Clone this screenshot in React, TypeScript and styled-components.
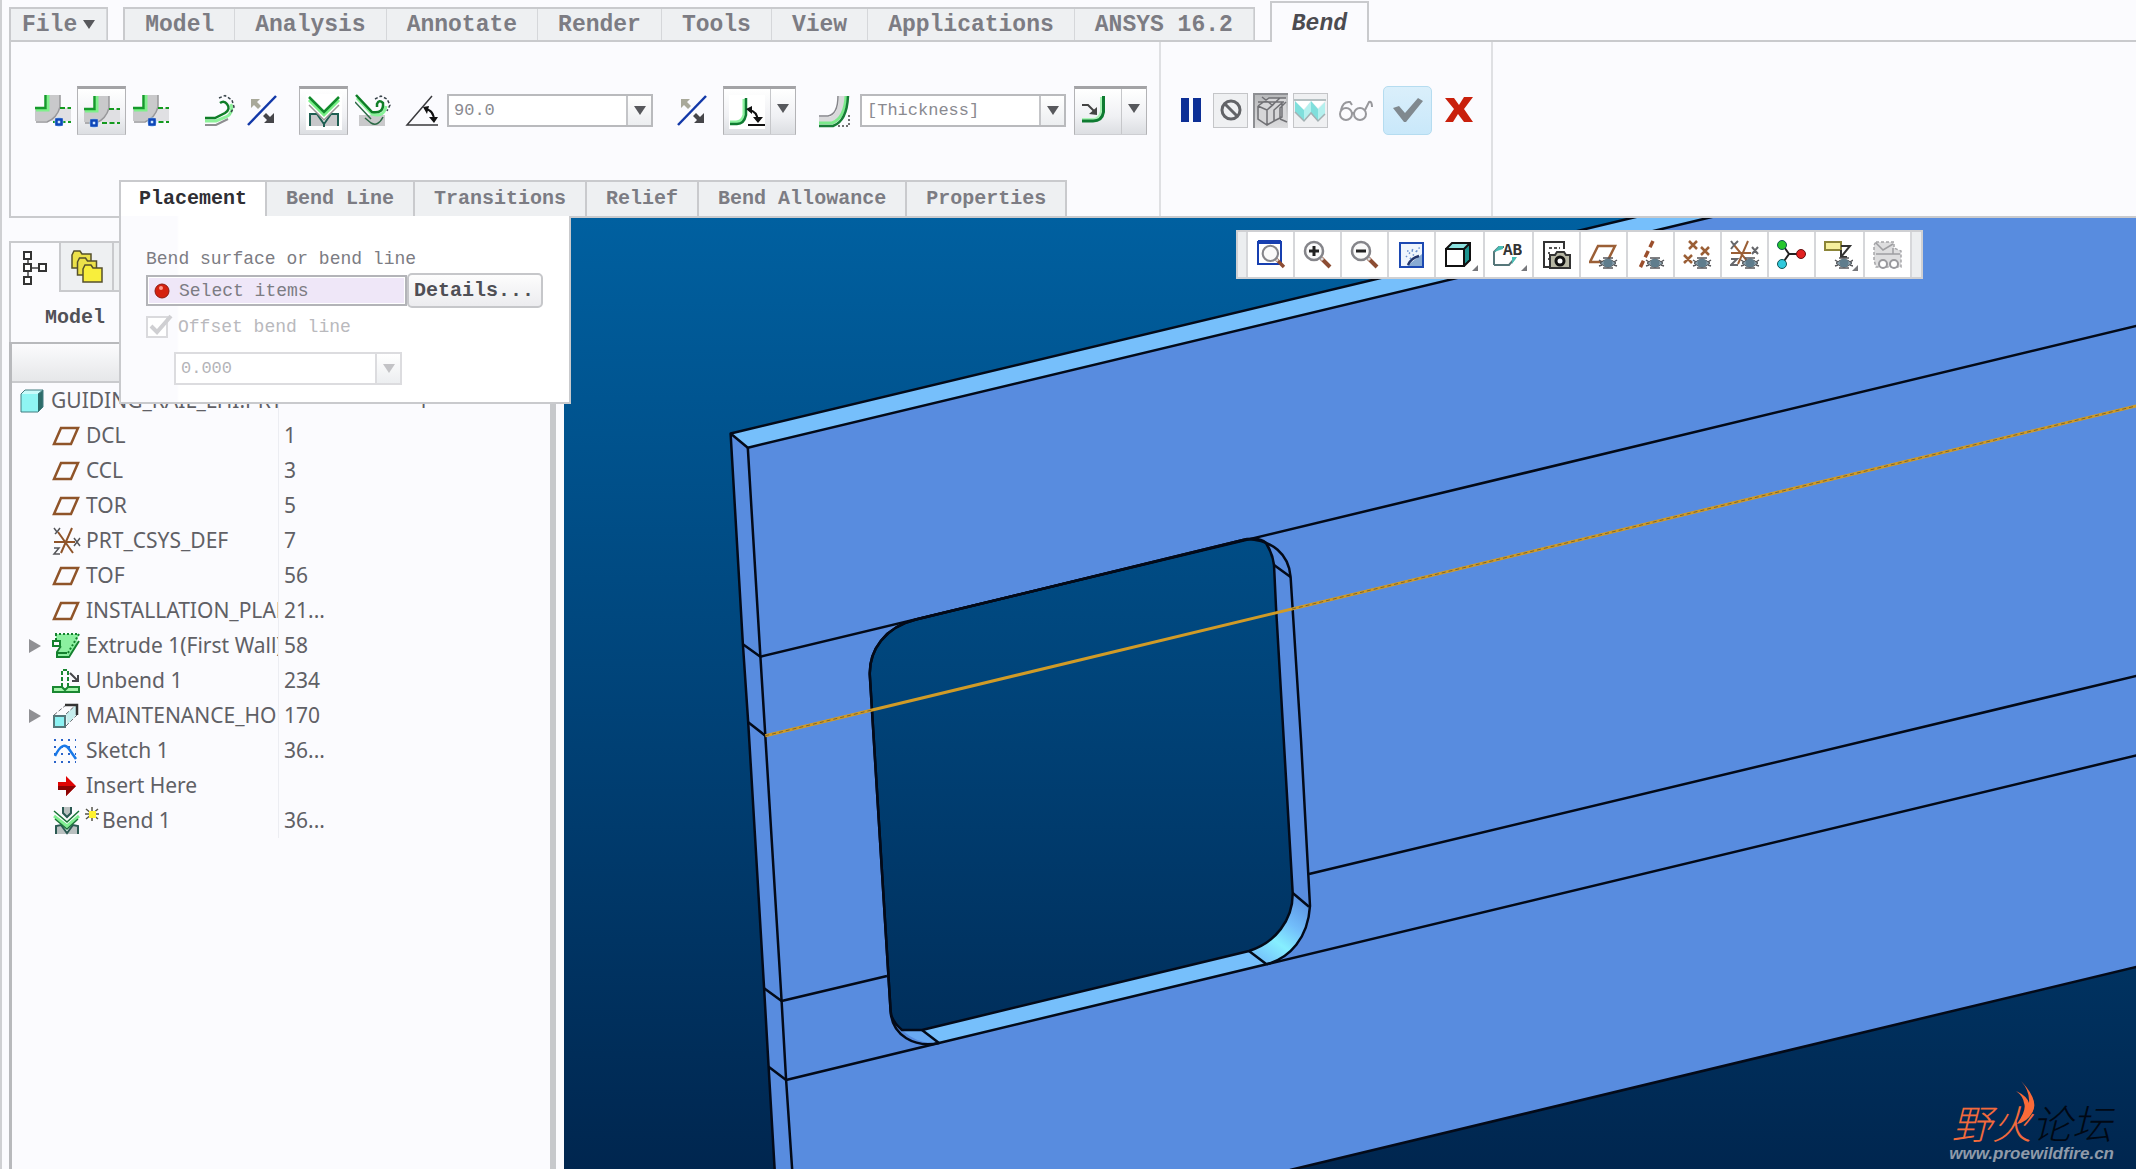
import React from "react";
import styled, { createGlobalStyle, css } from "styled-components";

const mono = '"Liberation Mono", "Noto Sans CJK SC", monospace';
const sans = '"Noto Sans", "Open Sans", "Noto Sans CJK SC", sans-serif';
const line = "#c9cacd";
const ink = "#7c7c83";

const GlobalStyle = createGlobalStyle`
  *, *::before, *::after { box-sizing: border-box; }
  body { margin: 0; background: #fbfbfe; font-family: ${mono}; color: ${ink}; overflow: hidden; }
  button, input { font: inherit; color: inherit; margin: 0; padding: 0; border-radius: 0; }
  button { background: none; border: 0; }
  svg { display: block; flex: none; }
`;

const Window = styled.div`
  min-height: 100vh;
  display: flex;
  flex-direction: column;
  border-left: 2px solid #cfd0d3;
  padding-left: 7px;
  background: #fbfbfe;
`;

/* ---------- ribbon tabs ---------- */
const TabStrip = styled.nav`
  display: flex;
  align-items: flex-end;
  height: 42px;
  border-bottom: 2px solid ${line};
`;
const TabGroup = styled.div`
  display: flex;
  margin: 0 15px -2px 0;
  border: 2px solid ${line};
  border-right-width: 1px;
`;
const RibbonTab = styled.button<{ $tight?: boolean }>`
  height: 31px;
  padding: 0 ${(p) => (p.$tight ? 11 : 20)}px;
  display: flex;
  align-items: center;
  gap: 6px;
  font-size: 23px;
  line-height: 30px;
  font-weight: 700;
  white-space: pre;
  background: #eef0f2;
  border-right: 1px solid #d5d7da;
`;
const CurrentTab = styled.button`
  height: 41px;
  margin-bottom: -2px;
  padding: 2px 20px 0;
  font-size: 23px;
  font-weight: 700;
  font-style: italic;
  color: #4b4b50;
  background: #fbfbfe;
  border: 2px solid ${line};
  border-bottom: 0;
`;
const Caret = styled.i<{ $pale?: boolean }>`
  display: block;
  border: 6px solid transparent;
  border-top: 9px solid ${(p) => (p.$pale ? "#c3c3c6" : "#57585c")};
  border-bottom: 0;
`;

/* ---------- ribbon ---------- */
const Ribbon = styled.section`
  position: relative;
  z-index: 2;
  display: flex;
  height: 176px;
  border-left: 2px solid ${line};
  border-bottom: 2px solid ${line};
`;
const Dashboard = styled.div`
  width: 1148px;
  display: flex;
  flex-direction: column;
  justify-content: space-between;
  padding-top: 44px;
`;
const Tools = styled.div`
  display: flex;
  align-items: center;
  height: 49px;
  padding-left: 17px;
`;
const Cluster = styled.div<{ $before?: number }>`
  display: flex;
  align-items: center;
  margin-left: ${(p) => p.$before ?? 0}px;
`;
const pressed = css`
  background: linear-gradient(#fff, #f0f1f4 60%, #dcdee2);
  border: 1px solid #b3b3b6;
  border-top: 3px solid #a3a3a6;
  border-bottom-color: #cdced2;
`;
const ToolButton = styled.button<{ $pressed?: boolean; $narrow?: boolean }>`
  width: ${(p) => (p.$narrow ? 42 : 49)}px;
  height: 49px;
  display: flex;
  align-items: center;
  justify-content: center;
  ${(p) => p.$pressed && pressed}
`;
const Split = styled.div`
  display: flex;
  width: 73px;
  height: 49px;
  ${pressed}
`;
const SplitMain = styled.button`
  flex: 1;
  display: flex;
  align-items: center;
  justify-content: center;
  border-right: 1px solid #c6c7ca;
`;
const SplitArrow = styled.button`
  width: 24px;
  padding: 0 6px 6px;
`;
const Combo = styled.div<{ $w: number; $pale?: boolean }>`
  display: flex;
  width: ${(p) => p.$w}px;
  height: 33px;
  border: 2px solid ${(p) => (p.$pale ? "#dcdcdf" : "#b9babd")};
  background: #fff;
  color: ${(p) => (p.$pale ? "#b4b4b8" : "#8a8a90")};
  input {
    flex: 1;
    min-width: 0;
    border: 0;
    padding: 0 5px;
    font-size: 17px;
    background: transparent;
    outline: none;
  }
  button {
    width: 25px;
    display: flex;
    align-items: center;
    justify-content: center;
    border-left: 2px solid ${(p) => (p.$pale ? "#dcdcdf" : "#c4c5c8")};
    background: linear-gradient(#fff, #eceef0);
  }
`;
const SubTabs = styled.div`
  position: relative;
  align-self: flex-start;
  display: flex;
  margin-left: 108px;
`;
const SubTab = styled.button<{ $on?: boolean }>`
  height: 36px;
  padding: 0 19px;
  font-size: 20px;
  font-weight: 700;
  line-height: 34px;
  border: solid ${line};
  border-width: 2px 2px 0 0;
  background: ${(p) => (p.$on ? "#fff" : "#eef0f2")};
  color: ${(p) => (p.$on ? "#2e2e33" : ink)};
  &:first-child { border-left-width: 2px; padding: 0 18px; }
`;
const Confirm = styled.div`
  display: flex;
  align-items: center;
  width: 334px;
  height: 174px;
  padding: 0 0 38px 12px;
  border: solid #dfe0e3;
  border-width: 0 2px;
  gap: 5px;
`;
const SmallTool = styled.button<{ $look?: "box" | "down" }>`
  width: 35px;
  height: 35px;
  display: flex;
  align-items: center;
  justify-content: center;
  border: ${(p) => (p.$look ? "1px solid #c4c5c8" : "0")};
  background: ${(p) => (p.$look === "box" ? "#eff0f2" : p.$look === "down" ? "linear-gradient(#b9babc, #dcdcde)" : "none")};
  ${(p) => p.$look === "down" && "border: 2px solid #8e8f93; border-width: 2px 0 0 2px;"}
`;
const Accept = styled.button`
  width: 49px;
  height: 49px;
  margin-left: 5px;
  display: flex;
  align-items: center;
  justify-content: center;
  border: 1px solid #b5dcf0;
  border-radius: 5px;
  background: linear-gradient(#daeffb, #c9e8fa);
`;

/* ---------- placement slide-down ---------- */
const Slide = styled.form`
  position: absolute;
  top: 100%;
  left: 0;
  width: 452px;
  padding: 31px 26px 17px 25px;
  background: linear-gradient(90deg, #fbfbfe 56px, #fff 58px);
  border: 2px solid ${line};
  border-top-width: 0;
  font-size: 18px;
  line-height: 24px;
`;
const Collector = styled.div`
  display: flex;
  align-items: center;
  margin-top: 2px;
`;
const CollectorBox = styled.label`
  flex: 1;
  min-width: 0;
  display: flex;
  align-items: center;
  gap: 9px;
  height: 31px;
  padding: 0 0 0 6px;
  border: 2px solid #b3b4b8;
  background: #efe7f8;
  box-shadow: inset 0 0 0 1px #fff;
  input { flex: 1; min-width: 0; border: 0; background: transparent; font-size: 18px; outline: none; }
`;
const Details = styled.button`
  flex: none;
  width: 136px;
  height: 35px;
  font-size: 20px;
  font-weight: 700;
  color: #4f4f55;
  text-align: left;
  padding-left: 5px;
  border: 2px solid #c6c7ca;
  border-radius: 5px;
  background: linear-gradient(#fdfdfd, #ececef);
`;
const Check = styled.label`
  display: flex;
  align-items: center;
  gap: 10px;
  height: 24px;
  margin: 7px 0 13px;
  color: #b9b9bd;
  span { position: relative; display: block; width: 22px; height: 22px; }
  input { appearance: none; display: block; width: 22px; height: 22px; border: 2px solid #dadadd; background: #fff; }
  svg { position: absolute; left: 3px; top: -2px; }
`;
const Offset = styled.div`
  margin-left: 28px;
`;

/* ---------- work area ---------- */
const Work = styled.main`
  flex: 1;
  display: flex;
`;
const Navigator = styled.aside`
  width: 555px;
  display: flex;
  flex-direction: column;
  padding-top: 23px;
`;
const NavTabs = styled.div`
  display: flex;
  height: 51px;
`;
const NavTab = styled.button<{ $on?: boolean }>`
  width: ${(p) => (p.$on ? 52 : 53)}px;
  display: flex;
  align-items: center;
  justify-content: center;
  border: 2px solid ${line};
  border-width: ${(p) => (p.$on ? "2px 2px 0 2px" : "2px 2px 2px 0")};
  background: ${(p) => (p.$on ? "#fbfbfe" : "#eef0f2")};
`;
const NavTitle = styled.h2`
  height: 50px;
  margin: 0;
  padding-left: 34px;
  border-left: 2px solid ${line};
  font-size: 20px;
  line-height: 52px;
  color: #515157;
`;
const TreeFrame = styled.div`
  flex: 1;
  margin-right: 8px;
  border-left: 3px solid #b8b9bc;
  border-right: 6px solid #c6c8cb;
  border-top: 2px solid #b8b9bc;
`;
const Tree = styled.table`
  width: 100%;
  table-layout: fixed;
  border-collapse: separate;
  border-spacing: 0;
  font-family: ${sans};
  font-size: 21px;
  color: #606065;
  th { height: 39px; padding: 0; border-bottom: 2px solid ${line}; background: linear-gradient(#fbfbfd, #e6e7e9); }
  th:first-child { width: 267px; }
  td { height: 35px; padding: 0; overflow: hidden; white-space: nowrap; line-height: 35px; }
  td:first-child { border-right: 1px solid #ecedf2; }
  td + td { padding-left: 5px; }
`;
const Item = styled.div<{ $root?: boolean }>`
  display: flex;
  align-items: center;
  height: 35px;
  padding-left: ${(p) => (p.$root ? 8 : 16)}px;
`;
const Twisty = styled.span`
  flex: none;
  width: 24px;
`;
const ItemIcon = styled.span<{ $wide?: boolean }>`
  flex: none;
  width: ${(p) => (p.$wide ? 50 : 34)}px;
  display: flex;
`;
const RootIcon = styled.span`
  flex: none;
  width: 31px;
`;
const RootValue = styled.span`
  padding-left: 133px;
`;

const Viewport = styled.section`
  position: relative;
  flex: 1;
  overflow: hidden;
  background: linear-gradient(#0060a0, #00264f);
`;
const Scene = styled.svg`
  position: absolute;
  inset: 0;
  width: 100%;
  height: 100%;
`;
const ViewBar = styled.div`
  position: absolute;
  top: 12px;
  right: 213px;
  display: flex;
  height: 49px;
  border: 2px solid #cfd0d3;
  background: #eceef0;
  padding: 0 9px 0 8px;
`;
const ViewButton = styled.button<{ $menu?: boolean }>`
  position: relative;
  width: ${(p) => (p.$menu ? 49 : 47)}px;
  display: flex;
  align-items: center;
  justify-content: center;
  background: #fff;
  border-left: 2px solid #d6d7da;
  &:last-child { width: 49px; border-right: 2px solid #d6d7da; }
  ${(p) =>
    p.$menu &&
    css`
      padding-right: 4px;
      &::after {
        content: "";
        position: absolute;
        right: 5px;
        bottom: 6px;
        border: 3px solid #77787c;
        border-top-color: transparent;
        border-left-color: transparent;
      }
    `}
`;
const Watermark = styled.div`
  position: absolute;
  right: 22px;
  bottom: 5px;
  display: flex;
  flex-direction: column;
  align-items: center;
`;
const Brand = styled.div`
  position: relative;
  font: italic 300 40px/44px "Noto Sans CJK SC", sans-serif;
  color: #000814;
  b { font-weight: 300; color: #f26a3c; }
  svg { position: absolute; left: 64px; top: -19px; }
`;
const Site = styled.div`
  font: italic 700 17px/20px "Liberation Sans", sans-serif;
  color: #8f9aa9;
`;

/* ---------- drawings ---------- */
const Svg = ({ w = 36, h = 36, children }: { w?: number; h?: number; children: React.ReactNode }) => (
  <svg width={w} height={h} viewBox={`0 0 ${w} ${h}`} fill="none" aria-hidden="true">{children}</svg>
);

const BendLineIcon = ({ dot }: { dot: number }) => (
  <Svg w={36} h={34}>
    <path d="M12 1H25V14H36V27H0V15H12Z" fill="#e0e0e3" />
    <path d="M12 1H25V12Q23 23 14 27H0V15H12Z" fill="#c9c9cb" />
    <path d="M25 1V13Q22 24 12 28H1" stroke="#98989b" strokeWidth="1.500" />
    <path d="M13 1V16H1" stroke="#7ff08b" strokeWidth="3" />
    <path d="M10.500 1V14H0" stroke="#159a2b" strokeWidth="2.500" />
    <path d="M25 14H36M18 28H36" stroke="#149a1f" strokeWidth="2" strokeDasharray="5 2.500" />
    <circle cx={dot} cy="28" r="4.500" fill="#8fc7ff" />
    <rect x={dot - 2.5} y="25.500" width="5" height="5" fill="#cfe5ff" stroke="#0e46b8" strokeWidth="2.500" />
  </Svg>
);
const RollIcon = () => (
  <Svg w={32} h={34}>
    <path d="M1 31H12L24 25" stroke="#8d8d90" strokeWidth="2" />
    <path d="M1 27H12L22 23Q30 19 27 10" stroke="#8df29a" strokeWidth="3" />
    <path d="M1 24H11L21 19Q27 15 23 10Q20 6 16 9" stroke="#0f7d27" strokeWidth="2.500" />
    <path d="M15 4L21 1.500L28 6L30 13L26 20" stroke="#39444a" strokeWidth="1.500" strokeDasharray="3 2" />
  </Svg>
);
const FlipIcon = () => (
  <Svg w={30} h={32}>
    <path d="M1 30L29 1" stroke="#1238a8" strokeWidth="2.500" />
    <path d="M4 4H13L10 7L14 11L11 14L7 10L4 13Z" fill="#a9a99a" />
    <path d="M27 28H17L20 25L16 21L19 18L23 22L27 18Z" fill="#46464a" />
  </Svg>
);
const VBendIcon = () => (
  <Svg w={36} h={36}>
    <rect width="36" height="36" fill="#fff" />
    <path d="M4 32V21L11 20L18 30L25 20L32 21V32Z" fill="#c8c8ca" />
    <path d="M4 32V20H11L18 30L25 20H32V32M18 30V33" stroke="#1f5f52" strokeWidth="2" />
    <path d="M3 11L18 26L33 11" stroke="#9a9695" strokeWidth="1.500" />
    <path d="M3 6L18 21L33 6" stroke="#7af087" strokeWidth="3" />
    <path d="M3 3L18 18L33 3" stroke="#128b2c" strokeWidth="2.500" />
  </Svg>
);
const VRollIcon = () => (
  <Svg w={36} h={34}>
    <rect x="4" y="21" width="26" height="11" fill="#c9c9cb" />
    <path d="M0 8L16 25M10 24L16 29Q23 33 28 23" stroke="#2b6845" strokeWidth="1.500" />
    <path d="M2 4L17 20Q29 24 31 12" stroke="#8af29a" strokeWidth="3" />
    <path d="M1 1L17 18Q29 20 28 9Q24 5 22 10V13" stroke="#0f7d27" strokeWidth="2.500" />
    <path d="M20 5L26 2L32 5L35 11L32 17" stroke="#39444a" strokeWidth="1.500" strokeDasharray="3 2" />
  </Svg>
);
const AngleIcon = () => (
  <Svg w={34} h={32}>
    <path d="M27 1L2 30H33" stroke="#3a3a3d" strokeWidth="1.500" />
    <path d="M20 14Q29 15 29 26" stroke="#111" strokeWidth="2" />
    <path d="M18 12L24 11L22 19ZM24 22L29 28L33 22Z" fill="#111" />
  </Svg>
);
const AngleDimIcon = () => (
  <Svg w={36} h={34}>
    <rect width="36" height="34" fill="#fff" />
    <path d="M15 4V20Q13 27 7 27H1" stroke="#8df2a0" strokeWidth="3" />
    <path d="M17 3V20Q15 29 8 29H1" stroke="#0e7b31" strokeWidth="2.500" />
    <path d="M19 30H36M20 15Q28 16 29 26" stroke="#111" strokeWidth="2" />
    <path d="M17 14L23 11L23 19ZM24 22L29 28L34 22Z" fill="#111" />
  </Svg>
);
const ThicknessIcon = () => (
  <Svg w={32} h={34}>
    <path d="M1 26H12Q24 22 24 2" stroke="#d9d9db" strokeWidth="6" />
    <path d="M1 22H10Q20 20 20 2" stroke="#85858a" strokeWidth="1.500" />
    <path d="M1 29H14Q27 24 28 2" stroke="#7bea8b" strokeWidth="3" />
    <path d="M1 32H15Q29 27 30 2" stroke="#167d36" strokeWidth="2.500" />
    <path d="M20 32H31V20" stroke="#444" strokeWidth="1.500" strokeDasharray="2 2" />
  </Svg>
);
const RadiusIcon = () => (
  <Svg w={36} h={34}>
    <path d="M21 2V16Q20 24 12 24H2" stroke="#a9f3b5" strokeWidth="2" />
    <path d="M23.500 1V17Q22 26 13 26H2" stroke="#0e7b31" strokeWidth="3" />
    <path d="M2 10H8L15 17" stroke="#444" strokeWidth="2" />
    <path d="M17 20V12L9 19Z" fill="#444" />
  </Svg>
);
const PauseIcon = () => (
  <Svg w={22} h={24}><path d="M1 0H9V24H1ZM13 0H21V24H13Z" fill="#0d2f96" /></Svg>
);
const NoneIcon = () => (
  <Svg w={24} h={24}><circle cx="12" cy="12" r="9" stroke="#626367" strokeWidth="3" /><path d="M6 6L18 18" stroke="#626367" strokeWidth="3" /></Svg>
);
const SolidIcon = () => (
  <Svg w={32} h={32}>
    <path d="M3 11L12 3H30V25L24 22L19 27L11 31L3 24Z" fill="#d6d6d8" />
    <path d="M2 11L13 3H30M2 11L11 15V30M11 15L24 3M2 11V24L11 30L18 26M18 9L11 15M18 26V15L26 8V22L18 26M24 24V13L30 7M24 24L31 27M2 7H28M6 2L16 10" stroke="#707074" strokeWidth="1.500" />
  </Svg>
);
const AttachIcon = () => (
  <Svg w={33} h={33}>
    <rect width="33" height="33" fill="#eff0f2" />
    <path d="M1 7H31L24 14L17 7L9 16Z" fill="#fff" />
    <path d="M1 7L10 16V27L1 18ZM17 7L24 15V27L17 19Z" fill="#7fdfdc" />
    <path d="M10 16L17 7V19L10 27ZM24 15L31 8V20L24 27Z" fill="#b4f0ee" />
    <path d="M0 6H32M1 18L10 27L17 19L24 27L31 20" stroke="#a3b0b3" strokeWidth="1.500" />
  </Svg>
);
const GlassesIcon = () => (
  <Svg w={35} h={24}>
    <circle cx="8" cy="16" r="6" stroke="#98989c" strokeWidth="2" /><circle cx="22" cy="16" r="6" stroke="#98989c" strokeWidth="2" />
    <path d="M14 15H16M3 12Q5 3 12 4L14 7M27 12L31 4Q34 3 34 9" stroke="#98989c" strokeWidth="2" />
  </Svg>
);
const TickIcon = () => (
  <Svg w={32} h={26}><path d="M1 11L7 9L13 16L26 1L31 4L14 25H12Z" fill="#80898f" /></Svg>
);
const CrossIcon = () => (
  <Svg w={28} h={26}><path d="M0 1H9L14 8L19 0H28L19 12L28 25H19L13 17L8 25H0L9 12Z" fill="#c9200c" /></Svg>
);

const TreeTabIcon = () => (
  <Svg w={26} h={36}>
    <path d="M6 9V26M10 18H18" stroke="#444" strokeWidth="1.500" />
    <path d="M2 2H9V9H2ZM2 14H9V21H2ZM2 27H9V34H2ZM17 14H24V21H17Z" fill="#fff" stroke="#333" strokeWidth="2" />
  </Svg>
);
const FoldersIcon = () => (
  <Svg w={34} h={36}>
    {[0, 1, 2].map((i) => (
      <path key={i} d="M2 6L4 2H10L12 5H21V19H2Z" transform={`translate(${i * 5.5} ${i * 7})`} fill={i === 2 ? "#f8ee3c" : "#ece14a"} stroke="#55502c" strokeWidth="1.500" />
    ))}
  </Svg>
);

const treeIcons: Record<string, React.ReactNode> = {
  part: <Svg w={24} h={24}><path d="M1 5L5 1H23V18L18 23Z" fill="#2d6c6a" /><path d="M1 5H18V23H1Z" fill="#8ff5f3" /><path d="M1 5L5 1H23L18 5Z" fill="#c9fbfa" /><path d="M1 5L5 1H23V18L18 23H1ZM18 5L23 1" stroke="#437d80" /></Svg>,
  plane: <Svg w={28} h={20}><path d="M9 2H26L19 18H2Z" stroke="#8f5429" strokeWidth="2.500" /></Svg>,
  csys: <Svg w={30} h={30}><path d="M2 16H23M6 6L21 27M20 2L9 27" stroke="#8f5429" strokeWidth="2" /><path d="M2 2L5 6L8 2M5 6L3 8M2 22H7L2 28H8M22 12L28 20M28 12L22 20" stroke="#55565a" strokeWidth="1.500" /></Svg>,
  extrude: <Svg w={28} h={28}><path d="M3 2H27L23 17L16 24H5V21L9 16V9H5Z" fill="#8cf0a0" /><path d="M1 9H8V14H1ZM9 14L5 20V25H17L27 9M6 21H15" stroke="#14812e" strokeWidth="2" /><path d="M3 2H27L16 21M4 2V8" stroke="#14812e" strokeWidth="2" strokeDasharray="2 2" /></Svg>,
  unbend: <Svg w={28} h={26}><path d="M1 19H10L13 22L16 19H27V24H1Z" fill="#a5f3ab" stroke="#1a8732" strokeWidth="2" /><path d="M10 19V2H16V19" stroke="#1a8732" strokeWidth="2" strokeDasharray="4 2" /><path d="M18 5L25 12M26 7V13H20" stroke="#45464a" strokeWidth="2" /></Svg>,
  hole: <Svg w={28} h={26}><path d="M14 11L25 1V11L15 22" fill="#c6eded" /><path d="M2 12L14 2M14 11L25 1M14 23L25 12" stroke="#6d7075" strokeDasharray="4 2" /><path d="M13 2H25V12" stroke="#333" strokeWidth="2.500" /><path d="M2 13H13V24H2Z" fill="#8df2f3" stroke="#55777a" strokeWidth="2" /></Svg>,
  sketch: <Svg w={26} h={26}><path d="M2 2H24M2 9H24M2 16H24M2 24H24" stroke="#2a63c9" strokeWidth="2" strokeDasharray="2 5" /><path d="M3 18Q11 2 17 11L24 21" stroke="#1878e8" strokeWidth="2.500" /></Svg>,
  insert: <Svg w={28} h={22}><path d="M6 7H14V1L24 11L14 21V15H6Z" fill="#e00404" /><path d="M6 11H24L14 21V15H6Z" fill="#8b0303" /></Svg>,
  bend: <Svg w={50} h={30}><path d="M11 1V7L15 11L19 7V1M4 28V20L9 19L15 27L21 19L26 20V28" fill="#b9c0c0" stroke="#2b5953" strokeWidth="2" /><path d="M2 10L15 20L27 10" stroke="#80ee92" strokeWidth="3" /><path d="M2 5L15 16L27 5M3 13L15 23L26 13" stroke="#187436" strokeWidth="1.500" /><path d="M34 3L46 13M46 3L34 13M40 1V15M33 8H47" stroke="#55564a" strokeWidth="1.500" /><rect x="37" y="5" width="7" height="7" fill="#fff130" /></Svg>,
};

const rows: { icon: string; name: string; id: string; open?: boolean }[] = [
  { icon: "plane", name: "DCL", id: "1" },
  { icon: "plane", name: "CCL", id: "3" },
  { icon: "plane", name: "TOR", id: "5" },
  { icon: "csys", name: "PRT_CSYS_DEF", id: "7" },
  { icon: "plane", name: "TOF", id: "56" },
  { icon: "plane", name: "INSTALLATION_PLANE", id: "21..." },
  { icon: "extrude", name: "Extrude 1(First Wall)", id: "58", open: true },
  { icon: "unbend", name: "Unbend 1", id: "234" },
  { icon: "hole", name: "MAINTENANCE_HOLE", id: "170", open: true },
  { icon: "sketch", name: "Sketch 1", id: "36..." },
  { icon: "insert", name: "Insert Here", id: "" },
  { icon: "bend", name: "Bend 1", id: "36..." },
];

const Eye = ({ x, y }: { x: number; y: number }) => (
  <g transform={`translate(${x} ${y})`}>
    <path d="M1 5Q9 -2 17 5Q9 13 1 5Z" fill="#8ba0ae" stroke="#4f5558" />
    <circle cx="9" cy="5" r="4.500" fill="#5f7d8d" />
    <path d="M0 2L3 4M0 8L3 7M18 2L15 4M18 8L15 7M4 0H14M4 10H14" stroke="#55565a" strokeWidth="1.500" />
  </g>
);
const Lens = () => (
  <g>
    <path d="M18 18L27 27" stroke="#8d4d33" strokeWidth="4" />
    <path d="M18 18L20 20" stroke="#ddd" strokeWidth="3" />
    <circle cx="11" cy="11" r="9" fill="#fafafa" stroke="#85858a" strokeWidth="2.500" />
  </g>
);
const viewTools: { label: string; menu?: boolean; art: React.ReactNode }[] = [
  { label: "Refit", art: <><path d="M2 2H25V24H2Z" stroke="#173fb0" strokeWidth="2" /><path d="M2 2H25" stroke="#173fb0" strokeWidth="4" /><g transform="translate(5 4) scale(.85)"><Lens /></g></> },
  { label: "Zoom In", art: <><Lens /><path d="M6 11H16M11 6V16" stroke="#222" strokeWidth="3" /></> },
  { label: "Zoom Out", art: <><Lens /><path d="M6 11H16" stroke="#222" strokeWidth="3" /></> },
  { label: "Repaint", art: <><path d="M3 3H26V27H3Z" fill="#eef5fc" stroke="#1c49b2" strokeWidth="2" /><path d="M25 14V26H10Z" fill="#88abd3" /><path d="M11 25Q14 18 22 16" stroke="#21356b" strokeWidth="2.500" /><path d="M9 17L18 7M13 19L23 7M10 11H21" stroke="#6b93cf" strokeWidth="1.500" strokeDasharray="1.500 3" /></> },
  { label: "Display Style", menu: true, art: <><path d="M3 9L9 3H27L21 9Z" fill="#8ce2df" /><path d="M21 9L27 3V20L21 26Z" fill="#1d9490" /><path d="M3 9H21V26H3ZM3 9L9 3H27V20L21 26M21 9L27 3" stroke="#111" strokeWidth="2" /></> },
  { label: "Saved Views", menu: true, art: <><path d="M2 25V12L7 7H12M2 25H17L23 18" stroke="#56777a" strokeWidth="2" /><path d="M2 12L7 6H11V9ZM20 17H25L20 24Z" fill="#48bdb5" /><text x="11" y="15" fontFamily="Liberation Mono" fontSize="16" fontWeight="700" fill="#333">AB</text></> },
  { label: "View Manager", art: <><path d="M7 27H2V2H22V9" stroke="#333" strokeWidth="2" /><path d="M7 8H18M6 13H8M6 19H8" stroke="#555" strokeWidth="2" strokeDasharray="3 2" /><path d="M8 15H13L15 12H22L24 15H28V28H8Z" fill="#b7b7a4" stroke="#333" strokeWidth="2" /><circle cx="18" cy="21" r="4" fill="#fff" stroke="#111" strokeWidth="3" /></> },
  { label: "Plane Display", art: <><path d="M9 6H26L18 22H1Z" stroke="#9b5f36" strokeWidth="2.500" /><Eye x={10} y={18} /></> },
  { label: "Axis Display", art: <><path d="M17 1L4 28" stroke="#9b4f2d" strokeWidth="3.500" strokeDasharray="7 4" /><Eye x={10} y={18} /></> },
  { label: "Point Display", art: <><path d="M6 1L14 9M14 1L6 9M18 7L26 15M26 7L18 15M1 15L9 23M9 15L1 23" stroke="#9b5f36" strokeWidth="2.500" /><Eye x={10} y={18} /></> },
  { label: "Csys Display", art: <><path d="M1 13H21M4 5L18 22M18 1L8 24" stroke="#9b5f36" strokeWidth="2" /><path d="M1 1L4 5L8 1M4 5L1 9M1 19H7L1 25H8M22 7L28 14M28 7L22 14" stroke="#66676b" strokeWidth="2" /><Eye x={11} y={18} /></> },
  { label: "Spin Center", art: <><path d="M5 4L12 14L5 24M12 14H24" stroke="#222" strokeWidth="2" /><circle cx="5" cy="5" r="4.500" fill="#25c62d" stroke="#155" /><circle cx="24" cy="14" r="4.500" fill="#e22121" stroke="#611" /><circle cx="5" cy="24" r="4.500" fill="#30c9dc" stroke="#155" /></> },
  { label: "Annotation Display", menu: true, art: <><path d="M2 2H18V10H2Z" fill="#f6f09d" stroke="#8c8538" strokeWidth="2" /><path d="M18 6H27L18 17M18 10V17H24" stroke="#333" strokeWidth="2" /><Eye x={12} y={18} /></> },
  { label: "Simulation Display", art: <><path d="M3 2H21V8L28 11V27H3L1 20V5Z" fill="#dededf" stroke="#a6a6a9" strokeWidth="1.500" strokeDasharray="3 2" /><path d="M3 3L10 10L20 4M3 14H27M20 8V14" stroke="#9f9fa2" strokeWidth="1.500" /><circle cx="10" cy="24" r="4" fill="#fff" stroke="#99999d" strokeWidth="2" /><circle cx="21" cy="24" r="4" fill="#fff" stroke="#99999d" strokeWidth="2" /></> },
];

const hole =
  "M916 619.500L1243 540C1252 538 1261 538 1266 543C1271 551 1273 556 1274 565L1276 607L1292.700 893C1293 920 1275 943 1249 951L922 1030H902C895 1024 891 1018 890.600 1011L869.800 675C869 650 885 627 916 619.500Z";
const holeFront =
  "M1247 539C1272 540 1289 554 1290.600 577L1301 740L1310 906C1308 938 1290 958 1266.500 964.300L939 1043C915 1048 892 1036 890.600 1011L869.800 675C869 650 885 627 916 619.500Z";

const Model = () => (
  <Scene viewBox="564 218 1572 951" preserveAspectRatio="xMinYMin slice" role="img" aria-label="Sheet metal part with cut-out">
    <defs>
      <linearGradient id="sky" gradientUnits="userSpaceOnUse" x1="0" y1="217" x2="0" y2="1169">
        <stop offset="0" stopColor="#0060a0" />
        <stop offset=".52" stopColor="#004277" />
        <stop offset="1" stopColor="#00264f" />
      </linearGradient>
      <linearGradient id="fillet" gradientUnits="userSpaceOnUse" x1="1305" y1="895" x2="1258" y2="960">
        <stop offset="0" stopColor="#588cdf" />
        <stop offset=".4" stopColor="#72bdfa" />
        <stop offset=".68" stopColor="#86efff" />
        <stop offset="1" stopColor="#74bffb" />
      </linearGradient>
    </defs>
    <rect x="564" y="217" width="1572" height="952" fill="url(#sky)" />
    <path d="M730.600 433.500L1640 216H2140V966L1290 1170H774.700Z" fill="#588cdf" />
    <path d="M730.600 433.500L1640 216H1716L747.800 447.700Z" fill="#76bffb" />
    <path d={holeFront} fill="#588cdf" />
    <path d="M922 1030L1249 951L1266.500 964.300L939 1043Z" fill="#76bffb" />
    <path d="M902 1030H922L939 1043Q918 1045 902 1030Z" fill="#69a9f2" />
    <path d="M1292.700 893L1309 906.700C1308 938 1290 958 1266.500 964.300L1249 951C1275 943 1293 920 1292.700 893Z" fill="url(#fillet)" />
    <path d={hole} fill="url(#sky)" />
    <g stroke="#030a18" strokeWidth="2.500" fill="none" strokeLinejoin="round">
      <path d="M1640 216L730.600 433.500L742.900 644.300L748.200 722.300L764.100 988.300L768.600 1066.700L774.700 1170" />
      <path d="M1716 216L747.800 447.700L760.400 656.700L765.300 735.700L781.600 1001L786.100 1080L792.200 1170" />
      <path d="M730.600 433.500L747.800 447.700M742.900 644.300L760.400 656.700M748.200 722.300L765.300 735.700M764.100 988.300L781.600 1001M768.600 1066.700L786.100 1080" />
      <path d="M760.400 656.700L2140 325M781.600 1001L887 976M1309 874L2140 675M786.100 1080L939 1043M1266.500 964.300L2140 754.500M1290 1170L2140 966" />
      <path d={hole} />
      <path d={holeFront} />
      <path d="M1274 565L1290.600 577M1292.700 893L1309 906.700M1249 951L1266.500 964.300M922 1030L939 1043" />
    </g>
    <path d="M765.300 735.700L2140 405" stroke="#d09b27" strokeWidth="3" />
    <path d="M765.300 735.700L872 710M1292 609L2140 405" stroke="#7d6429" strokeWidth="1" strokeDasharray="4 3" />
  </Scene>
);

const tabs = ["Model", "Analysis", "Annotate", "Render", "Tools", "View", "Applications", "ANSYS 16.2"];
const subTabs = ["Placement", "Bend Line", "Transitions", "Relief", "Bend Allowance", "Properties"];

export default function App() {
  return (
    <>
      <GlobalStyle />
      <Window>
        <TabStrip>
          <TabGroup><RibbonTab $tight>File<Caret /></RibbonTab></TabGroup>
          <TabGroup>{tabs.map((t) => <RibbonTab key={t}>{t}</RibbonTab>)}</TabGroup>
          <CurrentTab>Bend</CurrentTab>
        </TabStrip>

        <Ribbon>
          <Dashboard>
            <Tools>
              <Cluster>
                <ToolButton aria-label="Material inside"><BendLineIcon dot={24} /></ToolButton>
                <ToolButton $pressed aria-label="Material outside"><BendLineIcon dot={10} /></ToolButton>
                <ToolButton aria-label="Material centered"><BendLineIcon dot={19} /></ToolButton>
              </Cluster>
              <Cluster $before={24}>
                <ToolButton $narrow aria-label="Roll side"><RollIcon /></ToolButton>
                <ToolButton $narrow aria-label="Flip side"><FlipIcon /></ToolButton>
              </Cluster>
              <Cluster $before={16}>
                <ToolButton $pressed aria-label="Angle bend"><VBendIcon /></ToolButton>
                <ToolButton aria-label="Roll bend"><VRollIcon /></ToolButton>
              </Cluster>
              <Cluster $before={4}>
                <ToolButton as="label" htmlFor="angle" $narrow aria-label="Angle"><AngleIcon /></ToolButton>
                <Cluster $before={4}>
                  <Combo $w={206}><input id="angle" defaultValue="90.0" /><button aria-label="Angles"><Caret /></button></Combo>
                </Cluster>
              </Cluster>
              <Cluster $before={18}>
                <ToolButton $narrow aria-label="Flip angle"><FlipIcon /></ToolButton>
              </Cluster>
              <Cluster $before={10}>
                <Split><SplitMain aria-label="Angle dimension"><AngleDimIcon /></SplitMain><SplitArrow aria-label="Dimension types"><Caret /></SplitArrow></Split>
              </Cluster>
              <Cluster $before={17}>
                <ToolButton as="label" htmlFor="radius" $narrow aria-label="Radius"><ThicknessIcon /></ToolButton>
                <Cluster $before={5}>
                  <Combo $w={206}><input id="radius" defaultValue="[Thickness]" /><button aria-label="Radii"><Caret /></button></Combo>
                </Cluster>
              </Cluster>
              <Cluster $before={8}>
                <Split><SplitMain aria-label="Inside radius"><RadiusIcon /></SplitMain><SplitArrow aria-label="Radius types"><Caret /></SplitArrow></Split>
              </Cluster>
            </Tools>
            <SubTabs>
              {subTabs.map((t, i) => <SubTab key={t} $on={i === 0}>{t}</SubTab>)}
              <Slide>
                <label htmlFor="surface">Bend surface or bend line</label>
                <Collector>
                  <CollectorBox>
                    <Svg w={16} h={16}><circle cx="8" cy="8" r="7" fill="#d4220f" stroke="#8e1a10" /><circle cx="7" cy="5" r="2" fill="#ff9c8c" /></Svg>
                    <input id="surface" defaultValue="Select items" />
                  </CollectorBox>
                  <Details type="button">Details...</Details>
                </Collector>
                <Check>
                  <span>
                    <input type="checkbox" defaultChecked disabled />
                    <Svg w={24} h={22}><path d="M2 12L8 18L22 2" stroke="#cfcfd2" strokeWidth="4" /></Svg>
                  </span>
                  Offset bend line
                </Check>
                <Offset>
                  <Combo $w={228} $pale><input aria-label="Offset" defaultValue="0.000" disabled /><button type="button" aria-label="Offsets" disabled><Caret $pale /></button></Combo>
                </Offset>
              </Slide>
            </SubTabs>
          </Dashboard>
          <Confirm>
            <SmallTool aria-label="Pause"><PauseIcon /></SmallTool>
            <SmallTool $look="box" aria-label="No preview"><NoneIcon /></SmallTool>
            <SmallTool $look="down" aria-label="Feature preview"><SolidIcon /></SmallTool>
            <SmallTool $look="box" aria-label="Attached preview"><AttachIcon /></SmallTool>
            <Cluster $before={5}><SmallTool aria-label="Verify"><GlassesIcon /></SmallTool></Cluster>
            <Accept aria-label="Accept"><TickIcon /></Accept>
            <Cluster $before={4}><SmallTool aria-label="Cancel"><CrossIcon /></SmallTool></Cluster>
          </Confirm>
        </Ribbon>

        <Work>
          <Navigator>
            <NavTabs>
              <NavTab $on aria-label="Model tree"><TreeTabIcon /></NavTab>
              <NavTab aria-label="Folders"><FoldersIcon /></NavTab>
              <NavTab aria-label="Favorites" />
            </NavTabs>
            <NavTitle>Model</NavTitle>
            <TreeFrame>
              <Tree>
                <thead><tr><th /><th /></tr></thead>
                <tbody>
                  <tr>
                    <td><Item $root><RootIcon>{treeIcons.part}</RootIcon>GUIDING_RAIL_LHI.PRT</Item></td>
                    <td><RootValue>1</RootValue></td>
                  </tr>
                  {rows.map((r) => (
                    <tr key={r.name}>
                      <td>
                        <Item>
                          <Twisty>{r.open && <Svg w={14} h={16}><path d="M1 1L13 8L1 15Z" fill="#909094" /></Svg>}</Twisty>
                          <ItemIcon $wide={r.icon === "bend"}>{treeIcons[r.icon]}</ItemIcon>
                          {r.name}
                        </Item>
                      </td>
                      <td>{r.id}</td>
                    </tr>
                  ))}
                </tbody>
              </Tree>
            </TreeFrame>
          </Navigator>

          <Viewport>
            <Model />
            <ViewBar role="toolbar" aria-label="Graphics">
              {viewTools.map((t) => (
                <ViewButton key={t.label} $menu={t.menu} aria-label={t.label}><Svg w={30} h={30}>{t.art}</Svg></ViewButton>
              ))}
            </ViewBar>
            <Watermark>
              <Brand>
                <b>野火</b>论坛
                <Svg w={20} h={44}><path d="M5 0Q24 20 16 32Q11 41 1 43Q11 29 8 22Q7 15 0 10Q11 15 13 22Q14 10 5 0Z" fill="#fb6a38" /></Svg>
              </Brand>
              <Site>www.proewildfire.cn</Site>
            </Watermark>
          </Viewport>
        </Work>
      </Window>
    </>
  );
}
